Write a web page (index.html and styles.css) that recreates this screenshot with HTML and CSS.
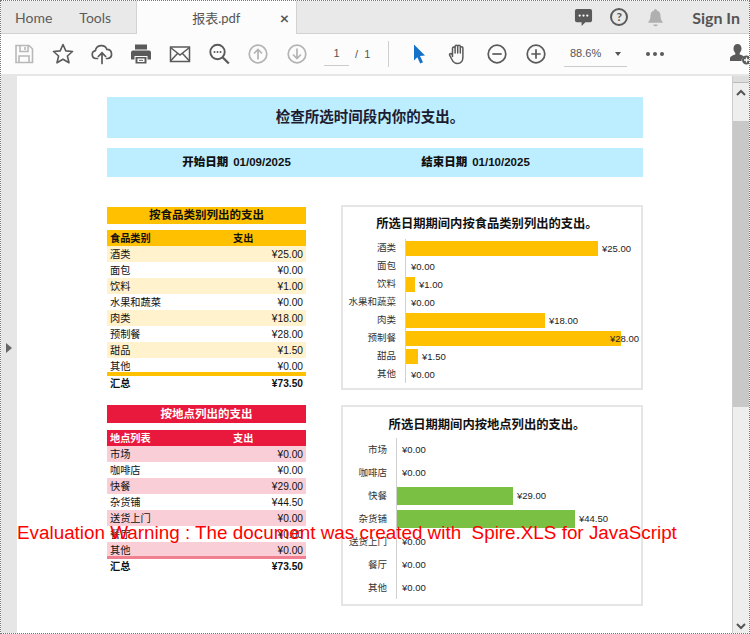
FILE: index.html
```html
<!DOCTYPE html>
<html lang="zh-CN">
<head>
    <meta charset="UTF-8">
    <meta name="viewport" content="width=device-width, initial-scale=1.0">
    <title>报表.pdf</title>
    <link rel="stylesheet" href="styles.css">
</head>
<body>

<div class="app">
    <div class="tab-bar">
        <a href="#" class="nav-tab nav-home">Home</a>
        <a href="#" class="nav-tab nav-tools">Tools</a>
        <div class="doc-tab">
            <span class="doc-name">报表.pdf</span>
            <span class="doc-close">×</span>
        </div>
        <div class="tab-actions">
            <svg class="tab-icon" viewBox="0 0 20 20"><path fill="#5a5a5a" d="M3 1h14a2 2 0 0 1 2 2v10a2 2 0 0 1-2 2h-5l-4 4v-4H3a2 2 0 0 1-2-2V3a2 2 0 0 1 2-2z"/><circle cx="6" cy="8" r="1.2" fill="#fff"/><circle cx="10" cy="8" r="1.2" fill="#fff"/><circle cx="14" cy="8" r="1.2" fill="#fff"/></svg>
            <span class="help-icon">?</span>
            <svg class="tab-icon" viewBox="0 0 20 20"><path fill="#b0b0b0" d="M10 1a1.500 1.500 0 0 1 1.500 1.600c2.600.7 3.800 3 3.800 5.600 0 3.200.8 4.800 2.200 6.300v1H2.500v-1c1.400-1.500 2.200-3.100 2.200-6.300 0-2.600 1.200-4.900 3.800-5.600A1.500 1.500 0 0 1 10 1z"/><path fill="#b0b0b0" d="M7.800 17.300h4.400a2.200 2 0 0 1-4.400 0z"/></svg>
            <a href="#" class="sign-in">Sign In</a>
        </div>
    </div>

    <div class="toolbar">
        <span class="tool"><svg viewBox="0 0 22 22" fill="none" stroke="#b8b8b8" stroke-width="1.6"><path d="M3 2.500h13l3.500 3.500v13.500H3z"/><path d="M7 2.500v6h8v-6M12 4v3M6 19.500v-6.500h10v6.500"/></svg></span>
        <span class="tool"><svg viewBox="0 0 22 22" fill="none" stroke="#5a5a5a" stroke-width="1.6"><path d="M11 1.500l2.800 6.400 6.700.6-5.100 4.500 1.600 6.800-6-3.600-6 3.600 1.600-6.800L1.500 8.500l6.700-.6z" stroke-linejoin="round"/></svg></span>
        <span class="tool"><svg viewBox="0 0 22 22" fill="none" stroke="#5a5a5a" stroke-width="1.700"><path d="M6.500 15.500H5a4 4 0 0 1-.6-7.900 6 6 0 0 1 11.500-1.200 4.600 4.600 0 0 1 1 9.100h-1.400" stroke-linecap="round"/><path d="M11 20.500V10M7.300 13.500L11 9.800l3.700 3.700" stroke-linecap="round"/></svg></span>
        <span class="tool"><svg viewBox="0 0 22 22"><path fill="#5a5a5a" d="M5 1.500h12v5H5zM3 7.500h16a2 2 0 0 1 2 2v7h-3.500v-3.500h-13v3.500H1v-7a2 2 0 0 1 2-2z"/><path fill="#5a5a5a" d="M5.500 14h11v6.500h-11z"/><path fill="#fff" d="M7.500 15.500h7v3.500h-7z"/><path stroke="#5a5a5a" d="M9 17.300h4"/></svg></span>
        <span class="tool"><svg viewBox="0 0 22 22" fill="none" stroke="#5a5a5a" stroke-width="1.500"><rect x="1.500" y="4" width="19" height="14.500"/><path d="M1.500 4.500L11 12l9.500-7.500M1.500 18l7-7.500M20.500 18l-7-7.500"/></svg></span>
        <span class="tool"><svg viewBox="0 0 22 22" fill="none" stroke="#5a5a5a" stroke-width="1.900"><circle cx="9.500" cy="9" r="7.200"/><path d="M14.800 14.500l6 6" stroke-width="2.300"/><g fill="#5a5a5a" stroke="none"><circle cx="6.500" cy="9" r="1"/><circle cx="9.500" cy="9" r="1"/><circle cx="12.500" cy="9" r="1"/></g></svg></span>
        <span class="tool"><svg viewBox="0 0 22 22" fill="none" stroke="#b4b4b4" stroke-width="1.700"><circle cx="11" cy="11" r="8.800"/><path d="M11 16.500V6.500M7 10.500l4-4 4 4"/></svg></span>
        <span class="tool"><svg viewBox="0 0 22 22" fill="none" stroke="#b4b4b4" stroke-width="1.700"><circle cx="11" cy="11" r="8.800"/><path d="M11 5.500v10M7 11.500l4 4 4-4"/></svg></span>
        <span class="page-input">1</span>
        <span class="page-total">/ &nbsp;1</span>
        <span class="tool-sep"></span>
        <span class="tool tool-cursor"><svg viewBox="0 0 22 22"><path fill="#1473c9" d="M6 1.500l11 11-5 .6 3 6.200-2.800 1.300-2.900-6.300L6 17.500z"/></svg></span>
        <span class="tool"><svg viewBox="0 0 22 22" fill="none" stroke="#5a5a5a" stroke-width="1.500" stroke-linecap="round"><path d="M5.500 13.500V5.300a1.300 1.300 0 0 1 2.600 0V10M8.100 10V3.500a1.300 1.300 0 0 1 2.600 0V10M10.700 10V3.500a1.300 1.300 0 0 1 2.600 0V10M13.300 10V5a1.300 1.300 0 0 1 2.600 0v9c0 4-2.200 6.500-5.500 6.500-3 0-4.300-1.500-5.500-4l-2.300-4.300c-.6-1.300 1.200-2.300 2.200-1l.7 1.300"/></svg></span>
        <span class="tool"><svg viewBox="0 0 22 22" fill="none" stroke="#5a5a5a" stroke-width="1.700"><circle cx="11" cy="11" r="8.800"/><path d="M6.300 11h9.400"/></svg></span>
        <span class="tool"><svg viewBox="0 0 22 22" fill="none" stroke="#5a5a5a" stroke-width="1.700"><circle cx="11" cy="11" r="8.800"/><path d="M6.300 11h9.400M11 6.300v9.400"/></svg></span>
        <span class="zoom-select">88.6%<i class="caret"></i></span>
        <span class="more-dots"><i></i><i></i><i></i></span>
        <span class="tool tool-user"><svg viewBox="0 0 22 22"><path fill="#5a5a5a" d="M7.500 1c2.500 0 4 2 4 4.500 0 2-.8 3.500-1.800 4.400v1.600c2.500.7 3.600 1.400 4.500 2.300-1.800 1-2.700 2.300-2.700 4.200H0v-2.800c0-1.800 3-3 5.300-3.700V9.900C4.300 9 3.500 7.500 3.500 5.500 3.500 3 5 1 7.500 1z"/><circle cx="16.500" cy="17" r="4.500" fill="#5a5a5a"/><path stroke="#fff" stroke-width="1.300" d="M14 17h5M16.500 14.500v5"/></svg></span>
    </div>

    <div class="viewer">
        <div class="side-rail"><i class="rail-arrow"></i></div>

        <div class="page">
            <div class="report-title">检查所选时间段内你的支出。</div>
            <div class="report-dates">
                <div><b>开始日期</b><span>01/09/2025</span></div>
                <div><b>结束日期</b><span>01/10/2025</span></div>
            </div>

            <div class="report-grid">
                <div class="sheet sheet-food">
                    <div class="sheet-title">按食品类别列出的支出</div>
                    <div class="sheet-head"><span>食品类别</span><span>支出</span></div>
                    <div class="sheet-row"><span>酒类</span><span>¥25.00</span></div>
                    <div class="sheet-row"><span>面包</span><span>¥0.00</span></div>
                    <div class="sheet-row"><span>饮料</span><span>¥1.00</span></div>
                    <div class="sheet-row"><span>水果和蔬菜</span><span>¥0.00</span></div>
                    <div class="sheet-row"><span>肉类</span><span>¥18.00</span></div>
                    <div class="sheet-row"><span>预制餐</span><span>¥28.00</span></div>
                    <div class="sheet-row"><span>甜品</span><span>¥1.50</span></div>
                    <div class="sheet-row"><span>其他</span><span>¥0.00</span></div>
                    <div class="sheet-total"><span>汇总</span><span>¥73.50</span></div>
                </div>

                <div class="chart chart-food">
                    <div class="chart-title">所选日期期间内按食品类别列出的支出。</div>
                    <div class="bar-row"><span class="bar-label">酒类</span><div class="bar-track"><i class="bar" style="width: 192px"></i><span class="bar-value">¥25.00</span></div></div>
                    <div class="bar-row"><span class="bar-label">面包</span><div class="bar-track"><span class="bar-value">¥0.00</span></div></div>
                    <div class="bar-row"><span class="bar-label">饮料</span><div class="bar-track"><i class="bar" style="width: 9px"></i><span class="bar-value">¥1.00</span></div></div>
                    <div class="bar-row"><span class="bar-label">水果和蔬菜</span><div class="bar-track"><span class="bar-value">¥0.00</span></div></div>
                    <div class="bar-row"><span class="bar-label">肉类</span><div class="bar-track"><i class="bar" style="width: 139px"></i><span class="bar-value">¥18.00</span></div></div>
                    <div class="bar-row"><span class="bar-label">预制餐</span><div class="bar-track"><i class="bar" style="width: 215px"></i><span class="bar-value bar-value-over">¥28.00</span></div></div>
                    <div class="bar-row"><span class="bar-label">甜品</span><div class="bar-track"><i class="bar" style="width: 12px"></i><span class="bar-value">¥1.50</span></div></div>
                    <div class="bar-row"><span class="bar-label">其他</span><div class="bar-track"><span class="bar-value">¥0.00</span></div></div>
                </div>

                <div class="sheet sheet-place">
                    <div class="sheet-title">按地点列出的支出</div>
                    <div class="sheet-head"><span>地点列表</span><span>支出</span></div>
                    <div class="sheet-row"><span>市场</span><span>¥0.00</span></div>
                    <div class="sheet-row"><span>咖啡店</span><span>¥0.00</span></div>
                    <div class="sheet-row"><span>快餐</span><span>¥29.00</span></div>
                    <div class="sheet-row"><span>杂货铺</span><span>¥44.50</span></div>
                    <div class="sheet-row"><span>送货上门</span><span>¥0.00</span></div>
                    <div class="sheet-row"><span>餐厅</span><span>¥0.00</span></div>
                    <div class="sheet-row"><span>其他</span><span>¥0.00</span></div>
                    <div class="sheet-total"><span>汇总</span><span>¥73.50</span></div>
                </div>

                <div class="chart chart-place">
                    <div class="chart-title">所选日期期间内按地点列出的支出。</div>
                    <div class="bar-row"><span class="bar-label">市场</span><div class="bar-track"><span class="bar-value">¥0.00</span></div></div>
                    <div class="bar-row"><span class="bar-label">咖啡店</span><div class="bar-track"><span class="bar-value">¥0.00</span></div></div>
                    <div class="bar-row"><span class="bar-label">快餐</span><div class="bar-track"><i class="bar" style="width: 116px"></i><span class="bar-value">¥29.00</span></div></div>
                    <div class="bar-row"><span class="bar-label">杂货铺</span><div class="bar-track"><i class="bar" style="width: 178px"></i><span class="bar-value">¥44.50</span></div></div>
                    <div class="bar-row"><span class="bar-label">送货上门</span><div class="bar-track"><span class="bar-value">¥0.00</span></div></div>
                    <div class="bar-row"><span class="bar-label">餐厅</span><div class="bar-track"><span class="bar-value">¥0.00</span></div></div>
                    <div class="bar-row"><span class="bar-label">其他</span><div class="bar-track"><span class="bar-value">¥0.00</span></div></div>
                </div>
            </div>

            <div class="watermark">Evaluation Warning : The document was created with  Spire.XLS for JavaScript</div>
        </div>

        <div class="scrollbar">
            <i class="scroll-cap"></i>
            <svg class="scroll-arrow" viewBox="0 0 10 8"><path d="M1 6l4-4 4 4" fill="none" stroke="#555" stroke-width="2"/></svg>
            <i class="scroll-thumb"></i>
            <svg class="scroll-arrow scroll-arrow-down" viewBox="0 0 10 8"><path d="M1 2l4 4 4-4" fill="none" stroke="#555" stroke-width="2"/></svg>
        </div>
    </div>
</div>

</body>
</html>
```

FILE: styles.css
```css
* {
    box-sizing: border-box;
}

body {
    margin: 0;
    font-family: "Liberation Sans", "Noto Sans CJK SC", sans-serif;
    background-color: #fff;
}

.app {
    width: 750px;
    height: 634px;
    border: 1px dotted #777;
    display: flex;
    flex-direction: column;
    overflow: hidden;
}

/* 顶部标签栏 */
.tab-bar {
    height: 33px;
    flex: none;
    display: flex;
    align-items: center;
    background-color: #e9e9e9;
    border-bottom: 1px solid #d2d2d2;
    font-family: "Lato", "Noto Sans CJK SC", sans-serif;
}

.nav-tab {
    color: #5c5c5c;
    font-size: 14px;
    text-decoration: none;
}

.nav-home {
    margin-left: 14px;
}

.nav-tools {
    margin-left: 27px;
}

.doc-tab {
    width: 161px;
    height: 33px;
    margin-left: 25px;
    align-self: flex-start;
    display: flex;
    align-items: center;
    background-color: #fcfcfc;
    border-left: 1px solid #d2d2d2;
    border-right: 1px solid #d2d2d2;
    color: #555;
    font-size: 13px;
}

.doc-name {
    margin-left: 55px;
}

.doc-close {
    margin-left: auto;
    margin-right: 7px;
    font-size: 16px;
    font-weight: bold;
    color: #555;
}

.tab-actions {
    flex: 1;
    display: flex;
    align-items: center;
    padding-left: 277px;
}

.tab-icon {
    width: 19px;
    height: 19px;
}

.help-icon {
    width: 18px;
    height: 18px;
    margin-left: 17px;
    margin-right: 18px;
    border: 2px solid #5a5a5a;
    border-radius: 50%;
    color: #5a5a5a;
    font-size: 12px;
    font-weight: bold;
    line-height: 14px;
    text-align: center;
}

.sign-in {
    margin-left: 27px;
    color: #555;
    font-size: 16px;
    font-weight: bold;
    text-decoration: none;
}

/* 工具栏 */
.toolbar {
    height: 40px;
    flex: none;
    display: flex;
    align-items: center;
    padding-left: 3px;
    background-color: #fcfcfc;
}

.toolbar > * {
    flex: none;
}

.tool {
    width: 39px;
    display: flex;
    justify-content: center;
}

.tool svg {
    width: 22px;
    height: 22px;
}

.page-input {
    width: 25px;
    height: 24px;
    margin-left: 8px;
    padding-top: 3px;
    border-bottom: 1px solid #ccc;
    color: #555;
    font-size: 11px;
    line-height: 16px;
    text-align: center;
}

.page-total {
    width: 11px;
    margin-left: 6px;
    color: #555;
    font-size: 11px;
    white-space: nowrap;
}

.tool-sep {
    width: 1px;
    height: 26px;
    margin-left: 22px;
    background-color: #d0d0d0;
}

.tool-cursor {
    margin-left: 10px;
}

.zoom-select {
    width: 63px;
    height: 25px;
    margin-left: 9px;
    padding: 5px 0 0 6px;
    display: flex;
    border-bottom: 1px solid #ccc;
    color: #555;
    font-size: 11px;
}

.caret {
    margin: 5px 0 0 14px;
    border-top: 4px solid #555;
    border-left: 3.500px solid transparent;
    border-right: 3.500px solid transparent;
    height: 0;
}

.more-dots {
    margin-left: 19px;
    display: flex;
    gap: 3px;
}

.more-dots i {
    width: 4px;
    height: 4px;
    border-radius: 50%;
    background-color: #5a5a5a;
}

.tool-user {
    margin-left: 66px;
    width: 22px;
}

/* 文档区域 */
.viewer {
    flex: 1;
    min-height: 0;
    display: flex;
    background-color: #e6e6e6;
    padding-top: 2px;
}

.side-rail {
    width: 16px;
    flex: none;
    display: flex;
    align-items: center;
    padding: 0 0 14px 5px;
}

.rail-arrow {
    border-left: 6px solid #666;
    border-top: 5.500px solid transparent;
    border-bottom: 5.500px solid transparent;
}

.page {
    flex: 1;
    position: relative;
    padding: 21px 0 0 90px;
    background-color: #fff;
    color: #111;
}

.report-title {
    width: 536px;
    height: 41px;
    background-color: #bdeeff;
    color: #1c1c33;
    font-size: 14.500px;
    font-weight: bold;
    line-height: 41px;
    text-align: center;
    padding-right: 10px;
}

.report-dates {
    width: 536px;
    height: 29px;
    margin-top: 10px;
    padding-left: 10px;
    display: grid;
    grid-template-columns: 239px 239px;
    background-color: #bdeeff;
    font-size: 11.500px;
    font-weight: bold;
    line-height: 29px;
    text-align: center;
}

.report-dates span {
    margin-left: 5px;
}

.report-grid {
    width: 536px;
    margin-top: 28px;
    display: grid;
    grid-template-columns: 199px 302px;
    column-gap: 35px;
    row-gap: 13px;
    align-items: start;
}

/* 左侧表格 */
.sheet {
    margin-top: 2px;
    font-size: 10.200px;
}

.sheet-place {
    margin-top: 0;
}

.sheet-title {
    height: 17px;
    margin-bottom: 6px;
    font-size: 11.500px;
    font-weight: bold;
    line-height: 17px;
    text-align: center;
}

.sheet-head,
.sheet-row,
.sheet-total {
    height: 16px;
    display: grid;
    grid-template-columns: 123px 1fr;
    padding: 0 3px;
    line-height: 18px;
}

.sheet-head {
    font-weight: bold;
}

.sheet-row span:last-child,
.sheet-total span:last-child {
    text-align: right;
}

.sheet-total {
    height: 18px;
    margin-top: -2px;
    position: relative;
    font-weight: bold;
    line-height: 16px;
}

.sheet-food .sheet-title,
.sheet-food .sheet-head {
    background-color: #ffc000;
}

.sheet-food .sheet-row:nth-child(odd) {
    background-color: #fff2cc;
}

.sheet-food .sheet-total {
    height: 20px;
    border-top: 4px solid #ffc000;
}

.sheet-place .sheet-title {
    height: 18px;
    line-height: 18px;
    margin-bottom: 7px;
}

.sheet-place .sheet-title,
.sheet-place .sheet-head {
    background-color: #e8193c;
    color: #fff;
}

.sheet-place .sheet-row:nth-child(odd) {
    background-color: #f9ced6;
}

.sheet-place .sheet-total {
    height: 19px;
    border-top: 3px solid #f0808f;
}

/* 右侧图表 */
.chart {
    border: 2px solid #e5e5e5;
    background-color: #fff;
    font-size: 9.500px;
}

.chart-title {
    height: 16px;
    padding-right: 10px;
    color: #111;
    font-size: 12.300px;
    font-weight: bold;
    line-height: 16px;
    text-align: center;
}

.chart-food {
    padding: 9px 0 5px;
}

.chart-food .chart-title {
    margin-bottom: 7px;
}

.chart-place {
    padding: 10px 0 5px;
}

.chart-place .chart-title {
    margin-bottom: 5px;
}

.bar-row {
    display: grid;
    height: 18px;
    grid-template-columns: 53px 1fr;
    column-gap: 9px;
    align-items: stretch;
}

.chart-place .bar-row {
    height: 23px;
    grid-template-columns: 44px 1fr;
}

.bar-label {
    color: #333;
    line-height: 18px;
    text-align: right;
    white-space: nowrap;
}

.chart-place .bar-label {
    line-height: 23px;
}

.bar-track {
    display: flex;
    align-items: center;
    border-left: 1px solid #d0d0d0;
}

.bar {
    height: 15px;
    background-color: #ffc000;
}

.chart-place .bar {
    height: 18px;
    background-color: #7ac143;
}

.bar-value {
    margin-left: 5px;
    color: #222;
}

.bar + .bar-value {
    margin-left: 4px;
}

.bar + .bar-value-over {
    margin-left: -11px;
}

.watermark {
    position: absolute;
    left: 0;
    top: 446px;
    color: #ff0000;
    font-size: 18.850px;
    line-height: 22px;
    white-space: pre;
}

/* 滚动条 */
.scrollbar {
    width: 17px;
    flex: none;
    position: relative;
    display: flex;
    flex-direction: column;
    align-items: center;
    background-color: #eee;
    border-left: 1px solid #ccc;
}

.scroll-cap {
    width: 100%;
    height: 7px;
    background-color: #ddd;
    border-bottom: 1px solid #bbb;
}

.scroll-arrow {
    width: 10px;
    height: 8px;
    margin-top: 6px;
}

.scroll-thumb {
    width: 100%;
    height: 286px;
    margin-top: 24px;
    background-color: #c8c8c8;
}

.scroll-arrow-down {
    margin-top: auto;
    margin-bottom: 3px;
}
```
